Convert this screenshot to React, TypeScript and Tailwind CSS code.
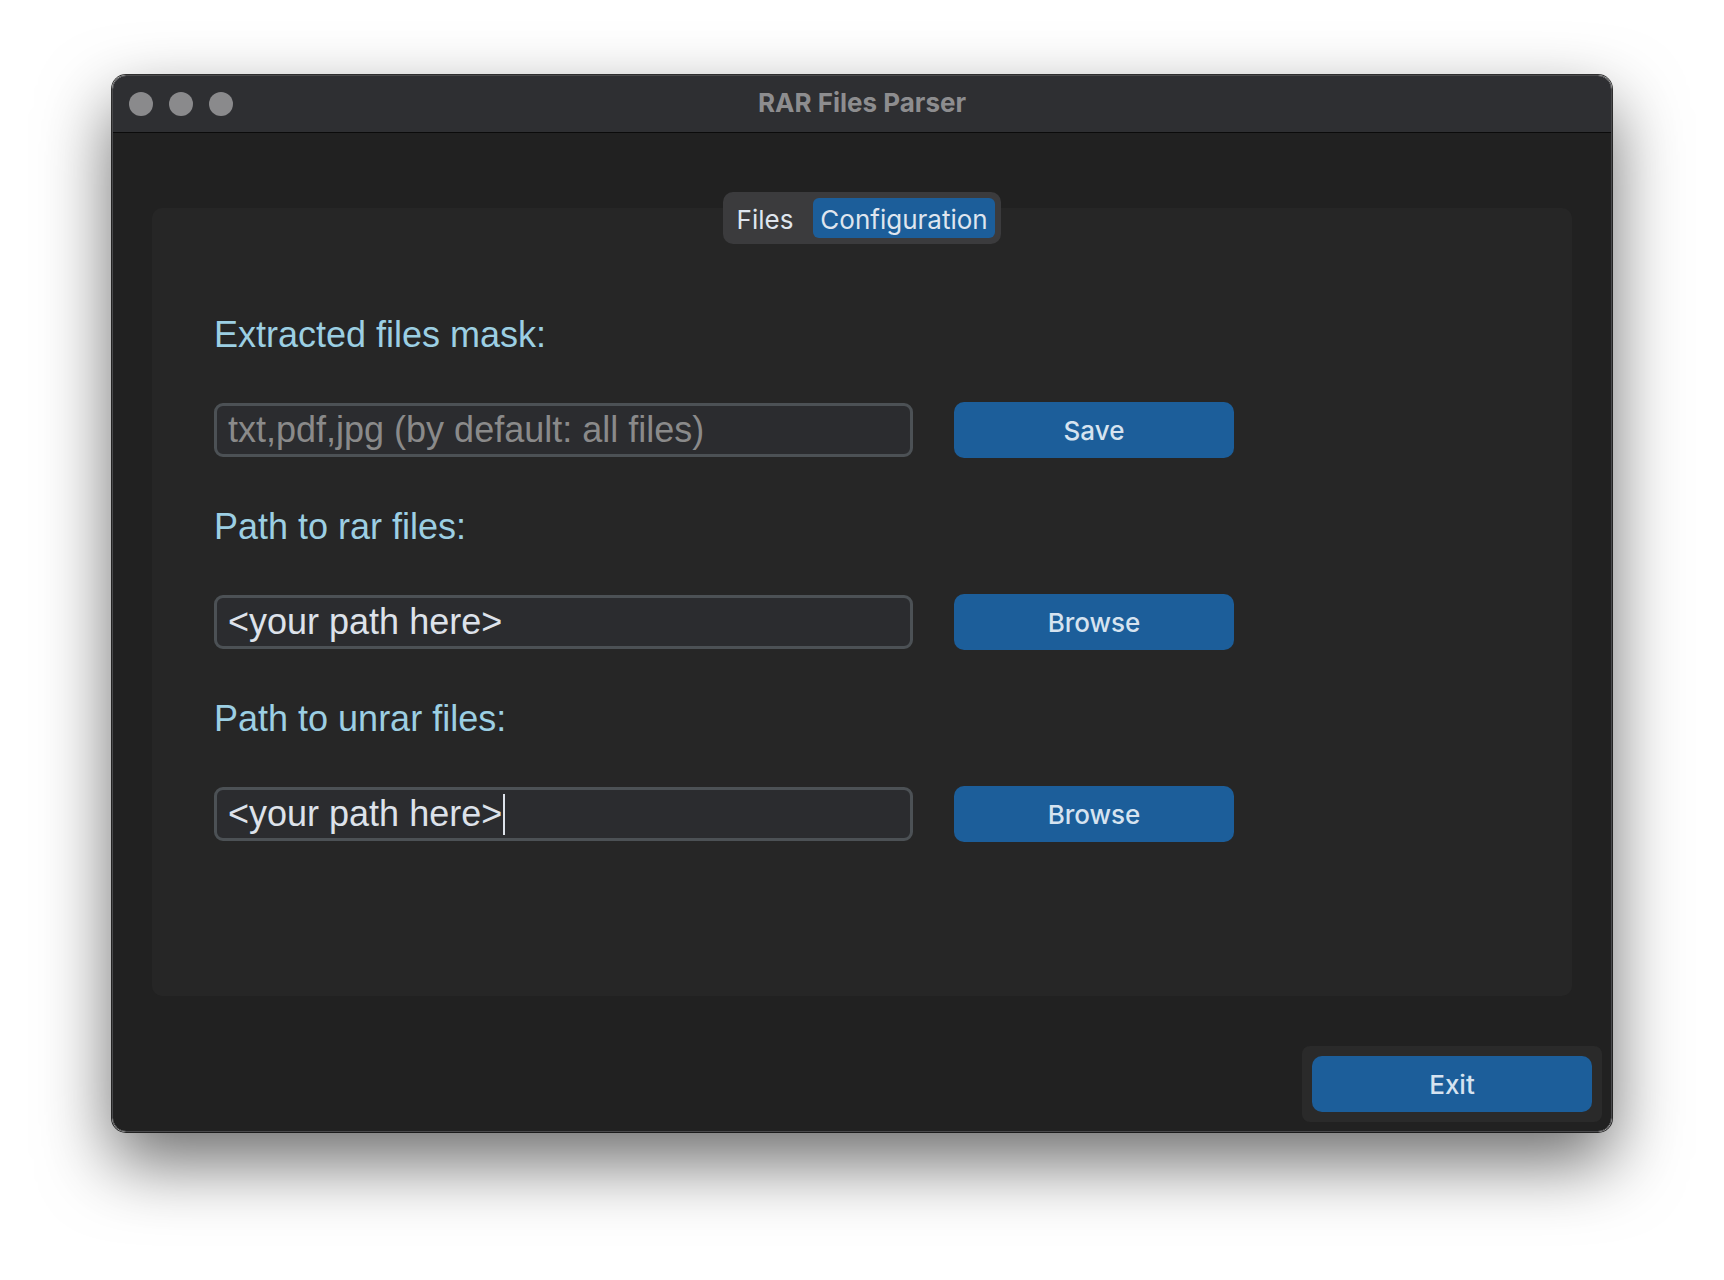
import { useState } from 'react'

const labelFont = { fontFamily: '"Liberation Sans", Arial, sans-serif' }
const uiFont = { fontFamily: 'Inter, "Noto Sans", sans-serif' }

function TrafficLights() {
  return (
    <div className="absolute left-[16px] top-0 h-full flex items-center gap-[16px]">
      <span className="w-[24px] h-[24px] rounded-full bg-[#8a8a8c]" />
      <span className="w-[24px] h-[24px] rounded-full bg-[#8a8a8c]" />
      <span className="w-[24px] h-[24px] rounded-full bg-[#8a8a8c]" />
    </div>
  )
}

function FieldBox({ value, placeholder, caret }: { value?: string; placeholder?: string; caret?: boolean }) {
  return (
    <div
      className="w-[699px] h-[54px] rounded-[9px] border-[3px] border-[#4c5155] bg-[#2b2c2f] flex items-center pl-[11px] text-[36px] leading-none whitespace-nowrap overflow-hidden"
      style={labelFont}
    >
      {value ? (
        <span className="text-[#dde2ea]">{value}</span>
      ) : (
        <span className="text-[#8a8a8a]">{placeholder}</span>
      )}
      {caret && <span className="ml-[1px] w-[2px] h-[41px] bg-[#dde2ea]" />}
    </div>
  )
}

function BlueButton({ children, onClick }: { children: React.ReactNode; onClick?: () => void }) {
  return (
    <button
      onClick={onClick}
      className="w-[280px] h-[56px] rounded-[10px] bg-[#1c5e9a] text-[#d6e3f0] text-[26px] font-medium flex items-center justify-center"
      style={uiFont}
    >
      {children}
    </button>
  )
}

export default function App() {
  const [tab, setTab] = useState<'files' | 'config'>('config')

  const sections = [
    { label: 'Extracted files mask:', placeholder: 'txt,pdf,jpg (by default: all files)', button: 'Save' },
    { label: 'Path to rar files:', value: '<your path here>', button: 'Browse' },
    { label: 'Path to unrar files:', value: '<your path here>', button: 'Browse', caret: true },
  ]

  return (
    <div className="w-full h-[1280px] bg-white pl-[112px] pt-[75px]">
      <div className="w-[1500px] h-[1057px] rounded-[14px] overflow-hidden border border-[#4a4a4c] ring-1 ring-black/80 shadow-[0_30px_70px_rgba(0,0,0,0.58)] flex flex-col">
        {/* Title bar */}
        <div className="relative h-[57px] shrink-0 bg-[#2e2f32] border-b border-[#0b0b0b] flex items-center justify-center">
          <TrafficLights />
          <span className="text-[26px] font-bold text-[#8d8d8f] -mt-[3px]" style={uiFont}>
            RAR Files Parser
          </span>
        </div>

        {/* Content */}
        <div className="flex-1 bg-[#212121] flex flex-col">
          <div className="relative mx-[39px] mt-[75px] h-[788px] rounded-[10px] bg-[#262626] pt-[107px] pl-[62px]">
            {/* Tabs */}
            <div className="absolute -top-[16px] left-1/2 -translate-x-1/2 h-[52px] p-[6px] rounded-[10px] bg-[#3b3b3d] flex" style={uiFont}>
              <button
                onClick={() => setTab('files')}
                className={`w-[72px] mr-[12px] h-[40px] pt-[3px] rounded-[6px] text-[26px] text-[#dfe5ee] flex items-center justify-center ${
                  tab === 'files' ? 'bg-[#1c5e9a]' : ''
                }`}
              >
                Files
              </button>
              <button
                onClick={() => setTab('config')}
                className={`w-[182px] h-[40px] pt-[3px] rounded-[6px] text-[26px] text-[#dfe5ee] flex items-center justify-center ${
                  tab === 'config' ? 'bg-[#1c5e9a]' : ''
                }`}
              >
                Configuration
              </button>
            </div>

            {sections.map((s, i) => (
              <div key={i} className={i > 0 ? 'mt-[49px]' : ''}>
                <div className="h-[40px] leading-[40px] text-[36px] text-[#9ccfe3] mb-[47px]" style={labelFont}>
                  {s.label}
                </div>
                <div className="h-[56px] flex items-center gap-[41px]">
                  <FieldBox value={s.value} placeholder={s.placeholder} caret={s.caret} />
                  <BlueButton>{s.button}</BlueButton>
                </div>
              </div>
            ))}
          </div>

          {/* Footer */}
          <div className="mt-[50px] flex justify-end pr-[9px]">
            <div className="p-[10px] rounded-[8px] bg-[#2a2a2a]">
              <BlueButton>Exit</BlueButton>
            </div>
          </div>
        </div>
      </div>
    </div>
  )
}
